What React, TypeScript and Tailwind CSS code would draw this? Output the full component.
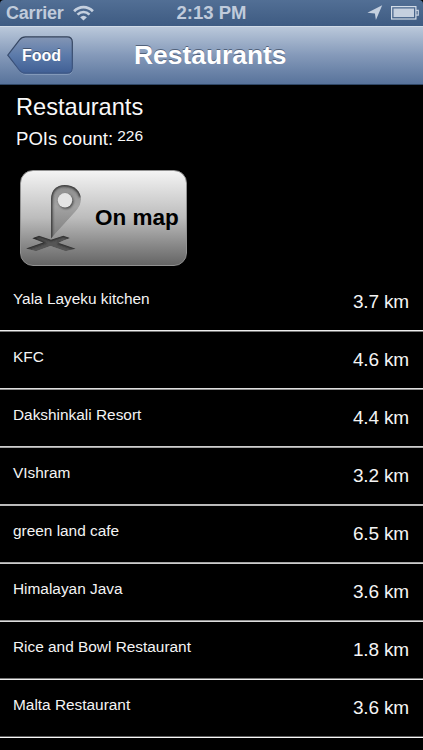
import React from 'react';

interface Poi {
  name: string;
  distance: string;
  rule: string;
}

// The separators get brighter along their lower edge further down the list
const pois: Poi[] = [
  { name: 'Yala Layeku kitchen', distance: '3.7 km', rule: 'from-[#eeeeee] to-[#777777]' },
  { name: 'KFC', distance: '4.6 km', rule: 'from-[#dedede] to-[#8c8c8c]' },
  { name: 'Dakshinkali Resort', distance: '4.4 km', rule: 'from-[#cecece] to-[#a0a0a0]' },
  { name: 'VIshram', distance: '3.2 km', rule: 'from-[#bcbcbc] to-[#b8b8b8]' },
  { name: 'green land cafe', distance: '6.5 km', rule: 'from-[#a4a4a4] to-[#cccccc]' },
  { name: 'Himalayan Java', distance: '3.6 km', rule: 'from-[#909090] to-[#dddddd]' },
  { name: 'Rice and Bowl Restaurant', distance: '1.8 km', rule: 'from-[#777777] to-[#eeeeee]' },
  { name: 'Malta Restaurant', distance: '3.6 km', rule: 'from-[#5c5c5c] to-[#f8f8f8]' },
];

const WifiIcon: React.FC = () => (
  <svg className="ml-[9px] mt-[5px] h-4 w-[21px]" viewBox="0 0 21 16" fill="none" stroke="#c5d0df" strokeWidth="2.7">
    <path d="M1.1 6.2C6.4.7 14.6.7 19.9 6.2" />
    <path d="M4.5 9.6C8 6.1 13 6.1 16.5 9.6" />
    <path d="M7.1 12.2Q10.5 9.1 13.9 12.2L10.5 15.5Z" fill="#c5d0df" stroke="none" />
  </svg>
);

const LocationIcon: React.FC = () => (
  <svg className="mt-[5px] h-4 w-4" viewBox="0 0 16 16" fill="#c5d0df">
    <path d="M15.2.3 8.9 15.1 7.9 8.4.4 7.8Z" />
  </svg>
);

const BatteryIcon: React.FC = () => (
  <svg className="ml-[8px] mt-[6px] h-[14px] w-[28px]" viewBox="0 0 28 14">
    <rect x=".6" y=".6" width="24.3" height="12.4" fill="none" stroke="#d3dce7" strokeWidth="1.2" />
    <rect x="2.5" y="2.5" width="20.5" height="8.6" fill="#c5d0df" />
    <path d="M25 4.3h2.3v4.8H25" fill="none" stroke="#c5d0df" strokeWidth="1.2" />
  </svg>
);

const BackButton: React.FC = () => (
  <button className="relative ml-[7px] mt-[9px] h-[39px] w-[67px]">
    <svg className="absolute inset-0" width="67" height="39" viewBox="0 0 67 39">
      <defs>
        <linearGradient id="back" x1="0" y1="0" x2="0" y2="1">
          <stop offset="0" stopColor="#8496b5" />
          <stop offset=".5" stopColor="#5c7baa" />
          <stop offset="1" stopColor="#405f95" />
        </linearGradient>
        <linearGradient id="backEdge" x1="0" y1="0" x2="0" y2="1">
          <stop offset="0" stopColor="#35445c" />
          <stop offset="1" stopColor="#3c5685" />
        </linearGradient>
      </defs>
      <path d="M1 20 13 35.5Q15 38.3 19 38.3H60Q65.5 38.3 65.5 33" fill="none" stroke="#a4b5d0" strokeWidth="1" opacity=".6" />
      <path
        d="M.8 19.2 12.5 3.8Q14.8.8 18.5.8H60Q65.3.8 65.3 6V32Q65.3 37.2 60 37.2H18.5Q14.8 37.2 12.5 34.3Z"
        fill="url(#back)"
        stroke="url(#backEdge)"
        strokeWidth="1.2"
      />
    </svg>
    <span className="absolute left-[15px] top-[11px] text-[16px] font-bold leading-[18px] text-white [text-shadow:0_-1px_0_#42536f]">
      Food
    </span>
  </button>
);

const CROSS = 'M7.3 56.3 14 53.7 26 57.7 38.3 53.7 45 56 33.3 60.8 50.7 66.7 40.7 69.3 25.5 64 11 69.3 1 66.5 18.3 60.6Z';
const PIN = 'M26 56.5V17C26 8.5 31.5 3 39.5 3C49 3 56 9 56 17.5C56 22 54 25.5 51 29Z';

const MapPinIcon: React.FC = () => (
  <svg className="ml-[4px] mt-[11px] h-[74px] w-[58px] shrink-0" viewBox="0 0 58 74">
    <defs>
      <linearGradient id="pin" x1="0" y1="0" x2="0" y2="1">
        <stop offset="0" stopColor="#8c8c8c" />
        <stop offset=".4" stopColor="#a3a3a3" />
        <stop offset="1" stopColor="#7c7c7c" />
      </linearGradient>
      <clipPath id="pinShape">
        <path d={PIN} />
      </clipPath>
      <clipPath id="crossShape">
        <path d={CROSS} />
      </clipPath>
      <filter id="soft" x="-20%" y="-20%" width="140%" height="140%">
        <feGaussianBlur stdDeviation=".9" />
      </filter>
    </defs>
    <g clipPath="url(#crossShape)">
      <path d={CROSS} fill="#565656" />
      <path
        d="M1 66.5 18.3 60.6 7.3 56.3 14 53.7 26 57.7 38.3 53.7 45 56M33.3 60.8 50.7 66.7"
        fill="none"
        stroke="#262626"
        strokeWidth="2.4"
        filter="url(#soft)"
      />
    </g>
    <g clipPath="url(#pinShape)">
      <path d={PIN} fill="url(#pin)" />
      <path d="M26 60V17C26 8.5 31.5 3 39.5 3C49 3 54 8 56 15" fill="none" stroke="#333" strokeWidth="3" filter="url(#soft)" />
    </g>
    <circle cx="41" cy="19.4" r="7.4" fill="#4c4c4c" filter="url(#soft)" />
    <circle cx="40" cy="18.3" r="7.2" fill="#e4e4e4" />
  </svg>
);

const PoiRow: React.FC<{ poi: Poi }> = ({ poi }) => (
  <li className="flex h-[58px] flex-col text-[#f4f4f4]">
    <div className="flex flex-1 justify-between pl-[13px] pr-[14px]">
      <span className="mt-[16px] text-[15.4px] leading-[18px]">{poi.name}</span>
      <span className="mt-[17px] text-[19px] leading-[22px] tracking-[-0.15px]">{poi.distance}</span>
    </div>
    <div className={`h-[2px] bg-linear-to-b from-50% to-50% ${poi.rule}`} />
  </li>
);

export default function App() {
  return (
    <div className="h-[750px] w-[423px] overflow-hidden bg-black font-['Liberation_Sans',Arial,sans-serif]">
      {/* Status bar */}
      <div className="grid h-[26px] grid-cols-[1fr_auto_1fr] rounded-t-[4px] bg-linear-to-b from-[#526f95] to-[#3e5b82] text-[18px] font-bold leading-[26px] text-[#c0cbdb]">
        <div className="flex pl-[6px]">
          <span className="tracking-[-0.2px]">Carrier</span>
          <WifiIcon />
        </div>
        <span className="text-[18.5px]">2:13 PM</span>
        <div className="flex justify-end pr-[4px]">
          <LocationIcon />
          <BatteryIcon />
        </div>
      </div>

      {/* Navigation bar */}
      <header className="flex h-[59px] border-b border-t border-b-[#304766] border-t-[#d1dbe7] bg-linear-to-b from-[#bac8da] via-[#8499b9] to-[#58739b]">
        <BackButton />
        <h1 className="ml-[60px] mt-[13px] text-[26.4px] font-bold leading-[30px] text-white [text-shadow:0_-1px_0_#52627b]">
          Restaurants
        </h1>
      </header>

      <main>
        <section className="pl-4 pt-[9px] text-[#f8f8f8]">
          <h2 className="text-[23.6px] leading-[27px]">Restaurants</h2>
          <p className="mt-[7px] flex leading-[22px]">
            <span className="text-[18.6px]">POIs count:</span>
            <span className="-mt-[3px] ml-[4px] text-[15.5px]">226</span>
          </p>
          <button className="ml-[4px] mt-[20px] flex h-[96px] w-[167px] rounded-[13px] border border-[#929292] bg-linear-to-b from-[#f4f4f4] via-[#bcbcbc] to-[#656565] text-left text-black">
            <MapPinIcon />
            <span className="ml-[12px] mt-[34px] whitespace-nowrap text-[22.5px] font-bold leading-[26px]">On map</span>
          </button>
        </section>

        <ul className="mt-[8px]">
          {pois.map((poi) => (
            <PoiRow key={poi.name} poi={poi} />
          ))}
        </ul>
      </main>
    </div>
  );
}
